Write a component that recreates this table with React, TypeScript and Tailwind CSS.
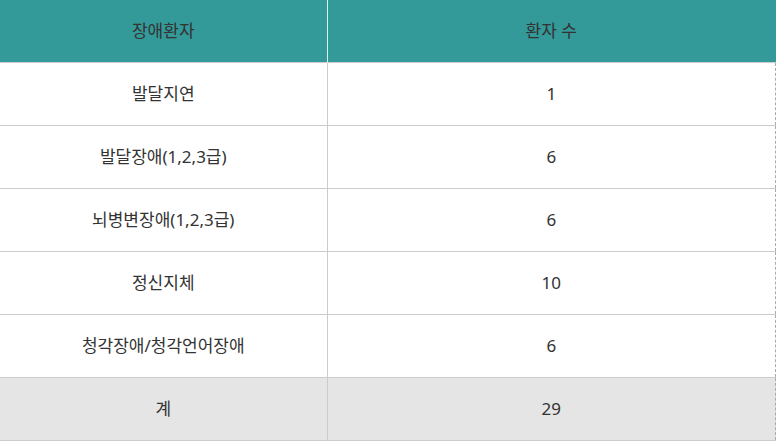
const rows = [
  { name: "발달지연", count: "1" },
  { name: "발달장애(1,2,3급)", count: "6" },
  { name: "뇌병변장애(1,2,3급)", count: "6" },
  { name: "정신지체", count: "10" },
  { name: "청각장애/청각언어장애", count: "6" },
];

export default function App() {
  return (
    <div className="w-[776px] h-[441px] bg-white text-[17px] text-[#333] font-['Noto_Sans','Noto_Sans_CJK_KR',sans-serif]">
      <table className="w-[776px] border-collapse table-fixed">
        <colgroup>
          <col className="w-[327px]" />
          <col />
        </colgroup>
        <thead>
          <tr className="h-[62px] bg-[#339999] border-b border-[#cccccc]">
            <th className="font-normal border-r border-[#d9eeee]">장애환자</th>
            <th className="font-normal border-r border-dashed border-r-[#339999]">환자 수</th>
          </tr>
        </thead>
        <tbody>
          {rows.map((r) => (
            <tr key={r.name} className="h-[63px] border-b border-[#cccccc]">
              <td className="text-center border-r border-[#cccccc]">{r.name}</td>
              <td className="text-center border-r border-dashed border-r-[#aaaaaa]">{r.count}</td>
            </tr>
          ))}
          <tr className="h-[63px] bg-[#e5e5e5] border-b border-[#cccccc]">
            <td className="text-center border-r border-[#cccccc]">계</td>
            <td className="text-center border-r border-dashed border-r-[#aaaaaa]">29</td>
          </tr>
        </tbody>
      </table>
    </div>
  );
}
